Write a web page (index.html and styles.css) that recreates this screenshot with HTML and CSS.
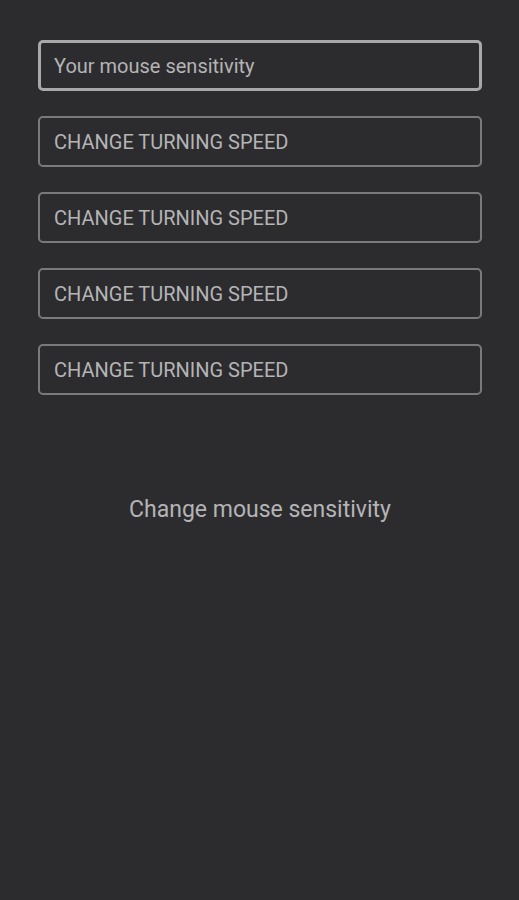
FILE: index.html
```html
<!DOCTYPE html>
<html>
<head>
<meta charset="utf-8">
<link rel="stylesheet" href="styles.css">
</head>
<body>
<div class="page">
  <div class="fields">
    <div class="field field-active">Your mouse sensitivity</div>
    <div class="field">CHANGE TURNING SPEED</div>
    <div class="field">CHANGE TURNING SPEED</div>
    <div class="field">CHANGE TURNING SPEED</div>
    <div class="field">CHANGE TURNING SPEED</div>
  </div>
  <div class="caption">Change mouse sensitivity</div>
</div>
</body>
</html>
```
FILE: styles.css
```css
html, body {
  margin: 0;
  padding: 0;
  background: #2c2c2e;
  height: 100%;
}
.page {
  font-family: Roboto, "Noto Sans", sans-serif;
  padding: 40px 37px 0 38px;
}
.fields {
  display: flex;
  flex-direction: column;
  gap: 25px;
}
.field {
  box-sizing: border-box;
  height: 51px;
  border: 2px solid #7a7a7c;
  border-radius: 5px;
  color: #b4b4b6;
  font-size: 20px;
  display: flex;
  align-items: center;
  padding-left: 14px;
}
.field-active {
  border: 3px solid #a8a8aa;
  padding-left: 13px;
}
.caption {
  margin-top: 101px;
  text-align: center;
  color: #b4b4b6;
  font-size: 23px;
}
```
